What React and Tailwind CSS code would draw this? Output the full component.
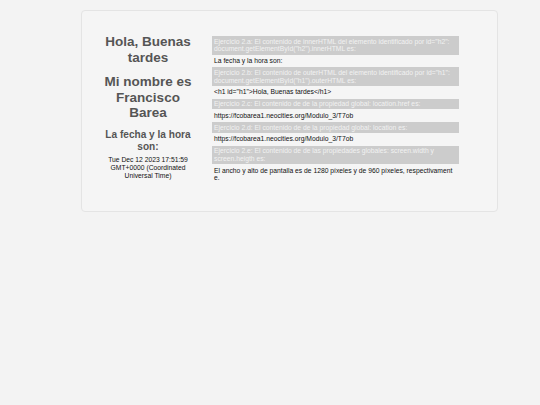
import React from 'react';

const ejercicios = [
  {
    label: 'Ejercicio 2.a: El contenido de innerHTML del elemento identificado por id="h2": document.getElementById("h2").innerHTML es:',
    value: 'La fecha y la hora son:',
  },
  {
    label: 'Ejercicio 2.b: El contenido de outerHTML del elemento identificado por id="h1": document.getElementById("h1").outerHTML es:',
    value: '<h1 id="h1">Hola, Buenas tardes</h1>',
  },
  {
    label: 'Ejercicio 2.c: El contenido de de la propiedad global: location.href es:',
    value: 'https://fcobarea1.neocities.org/Modulo_3/T7ob',
  },
  {
    label: 'Ejercicio 2.d: El contenido de de la propiedad global: location es:',
    value: 'https://fcobarea1.neocities.org/Modulo_3/T7ob',
  },
  {
    label: 'Ejercicio 2.e: El contenido de de las propiedades globales: screen.width y screen.heigth es:',
    value: 'El ancho y alto de pantalla es de 1280 píxeles y de 960 píxeles, respectivamente.',
  },
];

const App = () => {
  return (
    <div className="min-h-[405px] w-[540px] bg-[#f3f3f3] pt-[10px]" style={{ fontFamily: '"Liberation Sans", Arial, sans-serif' }}>
      <div className="ml-[81px] w-[417px] h-[202px] bg-[#f5f5f5] border border-[#e4e4e4] rounded-[4px] flex pt-[23px] pl-[18px]">
        <div className="w-[96px] text-center">
          <h1 className="text-[13.5px] leading-[15.5px] font-bold text-[#555]">Hola, Buenas tardes</h1>
          <h1 className="text-[13.5px] leading-[15.5px] font-bold text-[#555] mt-[9px]">Mi nombre es Francisco Barea</h1>
          <h2 className="text-[10.1px] leading-[12px] font-bold text-[#555] mt-[8px]">La fecha y la hora son:</h2>
          <p className="text-[6.75px] leading-[8px] text-[#111] mt-[3px]">
            Tue Dec 12 2023 17:51:59 GMT+0000 (Coordinated Universal Time)
          </p>
        </div>
        <div className="w-[247px] ml-[16px] mt-[2px] text-[6.75px] leading-[7.75px]">
          {ejercicios.map((e, i) => (
            <div key={i}>
              <div className="bg-[#cccccc] text-[#f2f2f2] px-[2px] py-[1.5px]">{e.label}</div>
              <p className="text-[#111] px-[2px] my-[2.5px] break-all">{e.value}</p>
            </div>
          ))}
        </div>
      </div>
    </div>
  );
};

export default App;
